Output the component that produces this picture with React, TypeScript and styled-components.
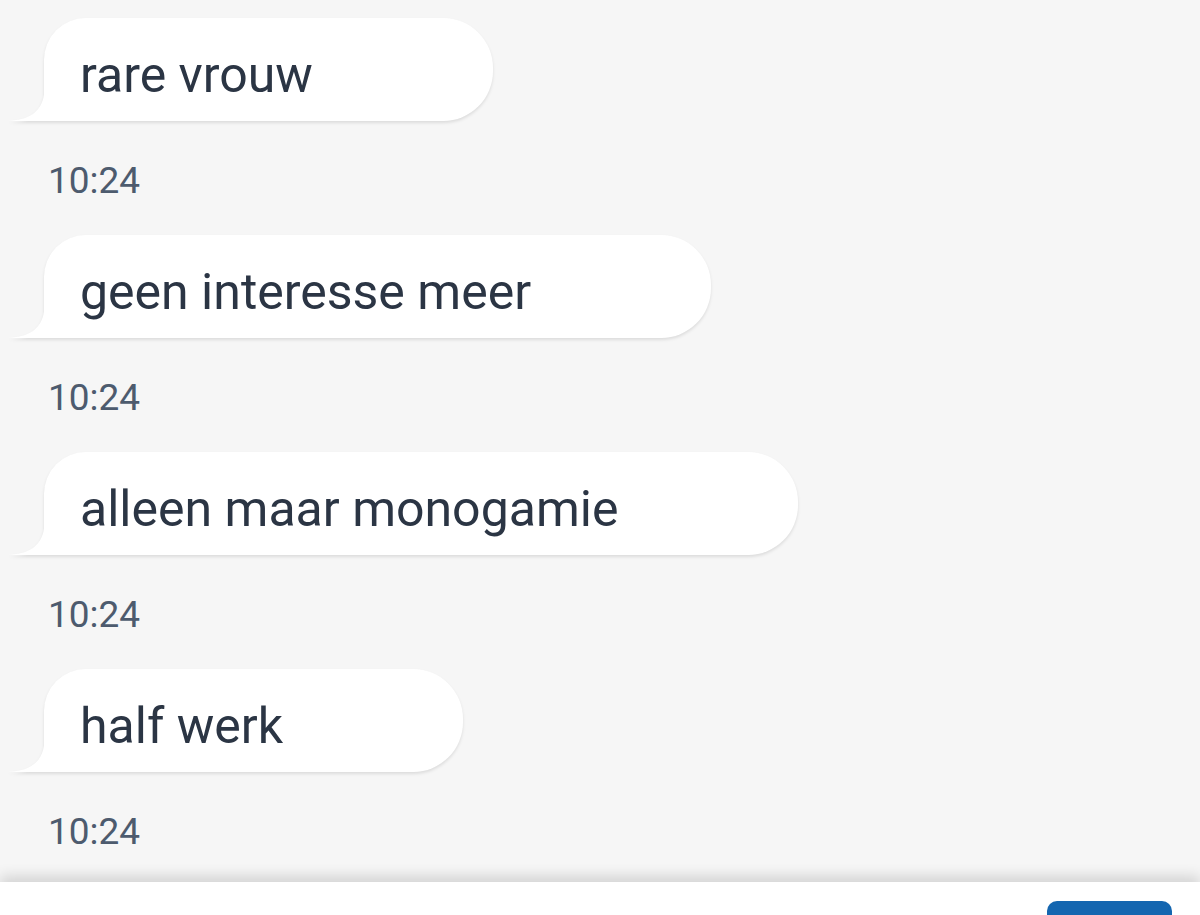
import styled, { createGlobalStyle } from 'styled-components';

const GlobalStyle = createGlobalStyle`
  html, body {
    margin: 0;
    padding: 0;
    background: #f6f6f6;
  }
  body {
    font-family: Roboto, 'Noto Sans', 'Liberation Sans', sans-serif;
  }
`;

interface Message {
  id: number;
  text: string;
  time: string;
}

const messages: Message[] = [
  { id: 1, text: 'rare vrouw', time: '10:24' },
  { id: 2, text: 'geen interesse meer', time: '10:24' },
  { id: 3, text: 'alleen maar monogamie', time: '10:24' },
  { id: 4, text: 'half werk', time: '10:24' },
];

function BubbleTail() {
  return (
    <Tail width="40" height="40" viewBox="0 0 40 40">
      <path d="M40 0 L40 40 L0 40 C20 39 33 32 36 14 L36 0 Z" fill="#ffffff" />
    </Tail>
  );
}

export default function App() {
  return (
    <>
      <GlobalStyle />
      <Screen>
        <MessageList>
          {messages.map((m) => (
            <MessageItem key={m.id}>
              <BubbleWrap>
                <Bubble>
                  <BubbleTail />
                  {m.text}
                </Bubble>
              </BubbleWrap>
              <Timestamp>{m.time}</Timestamp>
            </MessageItem>
          ))}
        </MessageList>
        <Composer>
          <SendButton aria-label="Verstuur" />
        </Composer>
      </Screen>
    </>
  );
}

const Screen = styled.div`
  height: 100vh;
  display: flex;
  flex-direction: column;
  overflow: hidden;
`;

const MessageList = styled.div`
  flex: 1;
  padding-top: 18px;
  display: flex;
  flex-direction: column;
  overflow: hidden;
`;

const MessageItem = styled.div`
  display: flex;
  flex-direction: column;
  align-items: flex-start;
`;

const BubbleWrap = styled.div`
  filter: drop-shadow(0 2px 1.5px rgba(0, 0, 0, 0.1));
  padding-left: 44px;
`;

const Bubble = styled.div`
  position: relative;
  height: 103px;
  box-sizing: border-box;
  background: #ffffff;
  color: #2b3544;
  font-size: 50px;
  line-height: 56px;
  padding: 29px 180px 18px 36px;
  border-radius: 42px 50px 50px 0;
  white-space: nowrap;
`;

const Tail = styled.svg`
  position: absolute;
  left: -36px;
  bottom: 0;
  display: block;
`;

const Timestamp = styled.div`
  margin: 40px 0 34px 48px;
  height: 40px;
  font-size: 37px;
  line-height: 40px;
  color: #4d5b6e;
`;

const Composer = styled.div`
  height: 33px;
  flex-shrink: 0;
  background: #ffffff;
  box-shadow: 0 -6px 14px rgba(0, 0, 0, 0.14);
  position: relative;
  display: flex;
  justify-content: flex-end;
  padding-right: 28px;
  overflow: hidden;
`;

const SendButton = styled.button`
  margin-top: 19px;
  width: 125px;
  height: 60px;
  border: none;
  border-radius: 10px;
  background: #1466b0;
`;
